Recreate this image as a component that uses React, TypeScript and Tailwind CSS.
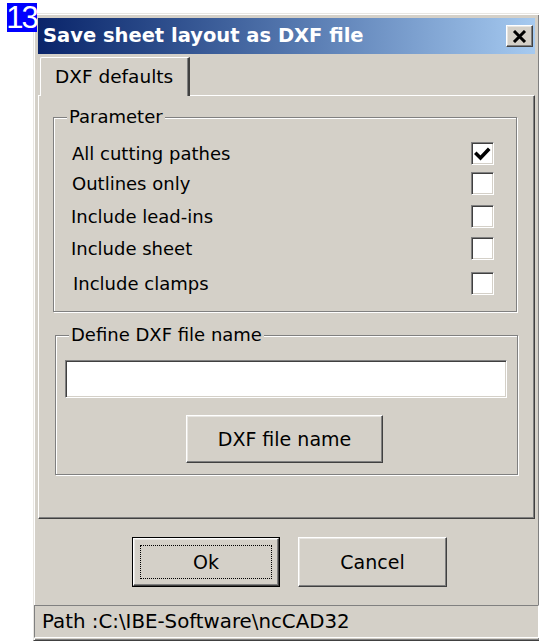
import React from "react";

const raised =
  "border border-t-white border-l-white border-r-[#404040] border-b-[#404040] shadow-[inset_-1px_-1px_0_#808080,inset_1px_1px_0_#e8e6e2]";
const sunken =
  "border border-t-[#808080] border-l-[#808080] border-r-white border-b-white shadow-[inset_1px_1px_0_#404040,inset_-1px_-1px_0_#d4d0c8]";
const etched = "border border-[#808080] shadow-[1px_1px_0_#ffffff,inset_1px_1px_0_#ffffff]";

const options = [
  { label: "All cutting pathes", checked: true, mt: "mt-[24px]", pl: "pl-[18px]" },
  { label: "Outlines only", checked: false, mt: "mt-[7px]", pl: "pl-[18px]" },
  { label: "Include lead-ins", checked: false, mt: "mt-[10px]", pl: "pl-[17px]" },
  { label: "Include sheet", checked: false, mt: "mt-[9px]", pl: "pl-[17px]" },
  { label: "Include clamps", checked: false, mt: "mt-[12px]", pl: "pl-[19px]" },
];

function CheckBox({ checked }: { checked: boolean }) {
  return (
    <div className={`w-[23px] h-[23px] bg-white ${sunken} flex items-center justify-center`}>
      {checked && (
        <svg width="17" height="15" viewBox="0 0 17 15">
          <polyline points="2.5,8 6.5,12 14,4" fill="none" stroke="#000" strokeWidth="3.6" strokeLinecap="square" />
        </svg>
      )}
    </div>
  );
}

function GroupBox({
  title,
  className,
  children,
}: {
  title: string;
  className: string;
  children: React.ReactNode;
}) {
  return (
    <div className={`relative ${etched} ${className}`}>
      <span className="absolute left-[13px] top-[-12px] px-[2px] bg-[#d4d0c8] text-[18px] leading-[22px] text-black">
        {title}
      </span>
      {children}
    </div>
  );
}

export default function App() {
  return (
    <div className="relative w-[539px] h-[643px] bg-white overflow-hidden pt-[13px] pl-[33px] font-['DejaVu_Sans',sans-serif] text-black">
      {/* help marker */}
      <div className="absolute left-[7px] top-[3px] z-20 w-[30px] h-[29px] bg-[#0000ff] flex items-center justify-center">
        <span className="text-white text-[31px] leading-none tracking-[-2px] pr-[1px] font-['Liberation_Sans',sans-serif]">
          13
        </span>
      </div>

      <div className="w-[507px] h-[628px] bg-[#d4d0c8] border border-t-[#e8e6e2] border-l-[#e8e6e2] border-r-[#404040] border-b-[#404040] shadow-[inset_1px_1px_0_#ffffff,inset_-1px_-1px_0_#808080] px-[4px] pt-[4px] flex flex-col">
        {/* title bar */}
        <div className="h-[36px] bg-gradient-to-r from-[#0a246a] to-[#a6caf0] flex items-center pl-[5px] pr-[2px]">
          <span className="flex-1 text-white font-bold text-[19.5px] leading-none">Save sheet layout as DXF file</span>
          <div className={`w-[27px] h-[22px] bg-[#d4d0c8] ${raised} flex items-center justify-center`}>
            <svg width="15" height="13" viewBox="0 0 15 13">
              <path d="M2 1 L13 12 M13 1 L2 12" stroke="#000" strokeWidth="3" />
            </svg>
          </div>
        </div>

        {/* tab strip */}
        <div className="mt-[3px] flex pl-[2px]">
          <div className="relative z-10 mb-[-1px] w-[150px] h-[39px] bg-[#d4d0c8] border-t border-l border-t-white border-l-white border-r-2 border-r-[#404040] rounded-tl-[2px] shadow-[inset_-1px_0_0_#808080] flex items-center pl-[14px] text-[18.5px]">
            DXF defaults
          </div>
        </div>

        {/* tab page */}
        <div className="h-[424px] border border-t-white border-l-white border-r-[#404040] border-b-[#404040] shadow-[inset_-1px_-1px_0_#808080] flex flex-col">
          <GroupBox title="Parameter" className="ml-[14px] mt-[21px] w-[464px] h-[195px] flex flex-col">
            {options.map((o) => (
              <div key={o.label} className={`flex items-center ${o.mt} ${o.pl} pr-[22px]`}>
                <span className="flex-1 text-[18px] leading-[22px]">{o.label}</span>
                <CheckBox checked={o.checked} />
              </div>
            ))}
          </GroupBox>

          <GroupBox title="Define DXF file name" className="ml-[16px] mt-[23px] w-[463px] h-[140px] flex flex-col">
            <div className={`ml-[9px] mt-[24px] w-[442px] h-[38px] bg-white ${sunken}`} />
            <div
              className={`ml-[130px] mt-[17px] w-[197px] h-[48px] ${raised} flex items-center justify-center text-[19px]`}
            >
              DXF file name
            </div>
          </GroupBox>
        </div>

        {/* dialog buttons */}
        <div className="mt-[18px] h-[50px] flex gap-[18px] pl-[94px]">
          <div className="w-[148px] h-[50px] border border-black">
            <div className={`w-full h-full ${raised} flex p-[6px]`}>
              <div className="flex-1 border border-dotted border-black flex items-center justify-center text-[19px]">
                Ok
              </div>
            </div>
          </div>
          <div className={`w-[149px] h-[50px] ${raised} flex items-center justify-center text-[19px]`}>Cancel</div>
        </div>

        {/* status bar */}
        <div className={`mt-[18px] -mx-[4px] h-[33px] ${sunken} shadow-none flex items-center pl-[7px] text-[19.8px]`}>
          Path :C:\IBE-Software\ncCAD32
        </div>
      </div>
    </div>
  );
}
